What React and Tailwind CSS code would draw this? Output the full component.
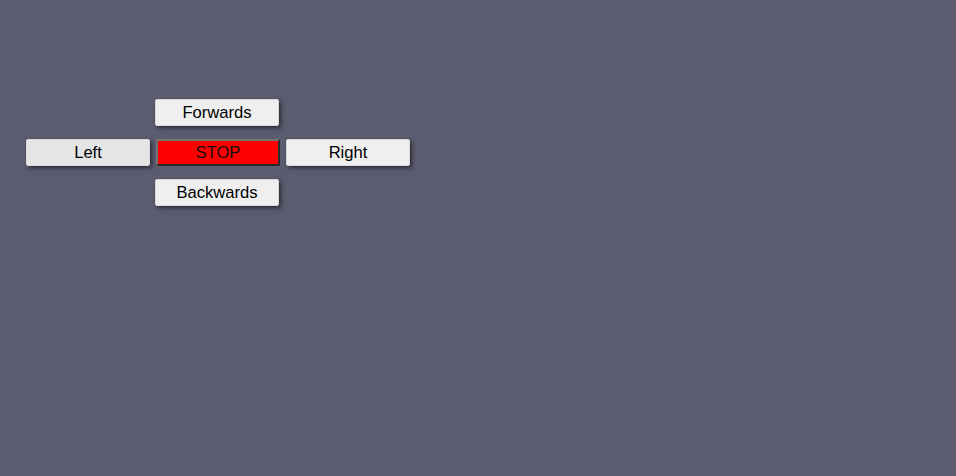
export default function App() {
  const btn =
    "h-[27px] w-[124px] rounded-[2px] border border-[#d8d8d8] bg-[#efefef] pt-[2px] text-[16.6px] text-black shadow-[2px_2px_4px_rgba(0,0,0,0.55)] flex items-center justify-center";
  return (
    <div className="w-[956px] h-[476px] bg-[#5c5c70] pt-[99px] pl-[26px]" style={{ fontFamily: '"Liberation Sans", Arial, sans-serif' }}>
      <div className="grid grid-cols-[124px_126px_124px] gap-x-[5px] gap-y-[13px]">
        <div />
        <button className={btn}>Forwards</button>
        <div />
        <button className={btn.replace("bg-[#efefef]", "bg-[#e5e5e5]")}>Left</button>
        <button className="ml-[1px] h-[27px] w-[124px] border-2 border-t-[#747474] border-l-[#747474] border-b-[#2b2b2b] border-r-[#2b2b2b] bg-[#ff0000] pt-[2px] text-[16.6px] text-[#111] flex items-center justify-center">
          STOP
        </button>
        <button className={btn}>Right</button>
        <div />
        <button className={btn}>Backwards</button>
        <div />
      </div>
    </div>
  );
}
